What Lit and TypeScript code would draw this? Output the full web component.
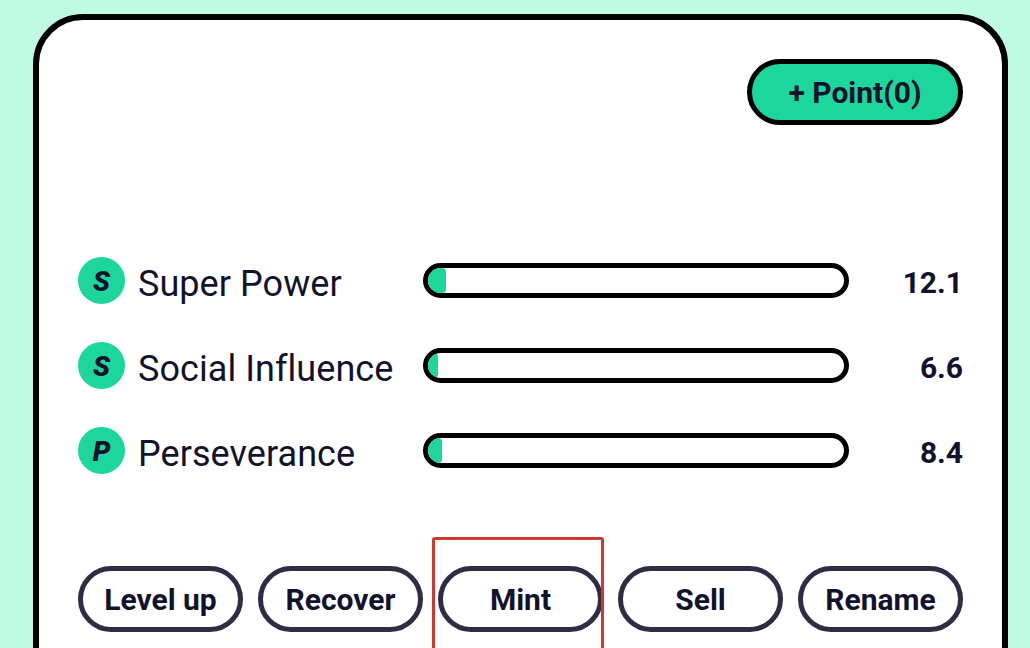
import { css, html, LitElement } from "lit";
import { customElement } from "lit/decorators.js";

const stats = [
    { badge: "S", name: "Super Power", pct: 4.3, value: "12.1" },
    { badge: "S", name: "Social Influence", pct: 2.4, value: "6.6" },
    { badge: "P", name: "Perseverance", pct: 3.3, value: "8.4" },
];

const actions = ["Level up", "Recover", "Mint", "Sell", "Rename"];

@customElement("app-root")
//@ts-ignore
class AppRoot extends LitElement {
    render() {
        return html`<div class="card">
      <div class="top">
        <button class="point">+ Point(0)</button>
      </div>
      <div class="stats">
        ${stats.map(
            (s) => html`<div class="row">
            <span class="badge">${s.badge}</span>
            <span class="name">${s.name}</span>
            <span class="bar"><span class="fill" style="width:${s.pct}%"></span></span>
            <span class="value">${s.value}</span>
          </div>`
        )}
      </div>
      <div class="actions">
        ${actions.map(
            (a) => html`<div class="slot">
            <button class="action">${a}</button>
            ${a === "Mint" ? html`<span class="mark"></span>` : ""}
          </div>`
        )}
      </div>
    </div>`;
    }

    static styles = css`
      :host {
        display: block;
        width: 1030px;
        height: 648px;
        overflow: hidden;
        box-sizing: border-box;
        padding: 14px 22px 0 33px;
        background: #bffbe3;
        font-family: Roboto, "Liberation Sans", sans-serif;
        color: #12122c;
      }
      button {
        font: inherit;
        color: inherit;
        padding: 0;
        box-sizing: border-box;
        cursor: pointer;
      }
      .card {
        box-sizing: border-box;
        width: 975px;
        height: 700px;
        padding: 39px 39px 0 39px;
        background: #fff;
        border: 6px solid #000;
        border-radius: 50px;
      }
      .top {
        display: flex;
        justify-content: flex-end;
      }
      .point {
        width: 216px;
        height: 66px;
        padding-top: 1px;
        border: 5px solid #000;
        border-radius: 33px;
        background: #1cd69c;
        font-size: 30px;
        font-weight: 700;
      }
      .stats {
        display: flex;
        flex-direction: column;
        gap: 37px;
        margin-top: 132px;
      }
      .row {
        display: flex;
        align-items: center;
        height: 48px;
      }
      .badge {
        flex: none;
        box-sizing: border-box;
        width: 47px;
        height: 47px;
        margin-right: 1px;
        padding-top: 2px;
        align-self: flex-start;
        border-radius: 50%;
        background: #1cd69c;
        display: flex;
        align-items: center;
        justify-content: center;
        font-size: 28px;
        font-weight: 900;
        font-style: italic;
      }
      .name {
        flex: none;
        width: 285px;
        margin-left: 12px;
        padding-top: 6px;
        font-size: 36px;
        letter-spacing: 0.06px;
      }
      .bar {
        flex: none;
        align-self: flex-start;
        box-sizing: border-box;
        width: 426px;
        height: 35px;
        margin-top: 6px;
        border: 5px solid #000;
        border-radius: 18px;
        overflow: hidden;
        background: #fff;
      }
      .fill {
        display: block;
        height: 100%;
        border-radius: 0 4px 4px 0;
        background: #1cd69c;
      }
      .value {
        flex: 1;
        padding-top: 2px;
        text-align: right;
        font-size: 30px;
        font-weight: 700;
      }
      .actions {
        display: flex;
        gap: 15px;
        margin-top: 91px;
      }
      .slot {
        position: relative;
        flex: none;
      }
      .action {
        display: block;
        width: 165px;
        height: 66px;
        border: 5px solid #2e2d42;
        border-radius: 33px;
        background: #fff;
        font-size: 30px;
        font-weight: 700;
      }
      .mark {
        position: absolute;
        left: -6px;
        right: -1px;
        top: -29px;
        height: 140px;
        box-sizing: border-box;
        border: 3px solid #cf3a2e;
        border-radius: 3px;
        pointer-events: none;
      }
    `;
}
